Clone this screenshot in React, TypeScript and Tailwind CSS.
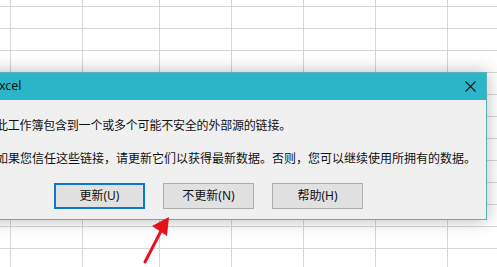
const cols = [11, 72, 77, 72, 72, 72, 72, 72];
const rows = [7, 22, 22, 22, 22, 22, 22, 22, 22, 22, 22, 22, 22];

const Sheet = () => (
  <div className="grid grid-cols-[11px_72px_77px_72px_72px_72px_72px_72px] grid-rows-[7px_repeat(12,22px)]">
    {rows.map((_, r) =>
      cols.map((__, c) => (
        <div key={`${r}-${c}`} className="border-r border-b border-[#d6d6d6]" />
      ))
    )}
  </div>
);

const Button = ({ label, primary }: { label: string; primary?: boolean }) => (
  <div
    className={
      "w-[91px] h-[26px] flex items-center justify-center bg-[#e1e1e1] text-[12px] text-[#111] " +
      (primary ? "border-2 border-[#0a78d4]" : "border border-[#adadad]")
    }
  >
    {label}
  </div>
);

export default function App() {
  return (
    <div className="relative w-[497px] h-[267px] overflow-hidden bg-white font-['Noto_Sans','Noto_Sans_CJK_SC',sans-serif]">
      <Sheet />

      {/* dialog */}
      <div className="absolute left-[-16px] top-[72px] w-[503px] border border-[#5fb0b6] shadow-[0_0_16px_rgba(0,0,0,0.28)]">
        <div className="h-[27px] bg-[#2bb5c8] flex items-center justify-between pl-[7px] pr-[10px]">
          <span className="text-[12.5px] text-[#111] leading-none">Excel</span>
          <svg width="11" height="11" viewBox="0 0 11 11">
            <path d="M0.5 0.5 L10.5 10.5 M10.5 0.5 L0.5 10.5" stroke="#1a1a1a" strokeWidth="1.1" fill="none" />
          </svg>
        </div>
        <div className="bg-[#f0f0f0] pt-[18px] pb-[10px] pl-[11px] text-[12px] text-[#111] leading-[16px]">
          <p className="whitespace-nowrap tracking-[-0.2px]">此工作簿包含到一个或多个可能不安全的外部源的链接。</p>
          <p className="mt-[17px] whitespace-nowrap">如果您信任这些链接，请更新它们以获得最新数据。否则，您可以继续使用所拥有的数据。</p>
          <div className="mt-[16px] flex gap-[18px] pl-[58px]">
            <Button label="更新(U)" primary />
            <Button label="不更新(N)" />
            <Button label="帮助(H)" />
          </div>
        </div>
      </div>

      {/* red arrow */}
      <svg className="absolute left-0 top-0" width="497" height="267" viewBox="0 0 497 267">
        <line x1="145" y1="262" x2="161" y2="231" stroke="#e5141c" strokeWidth="3" strokeLinecap="round" />
        <polygon points="169,217 152,226 167,236" fill="#e5141c" />
      </svg>
    </div>
  );
}
